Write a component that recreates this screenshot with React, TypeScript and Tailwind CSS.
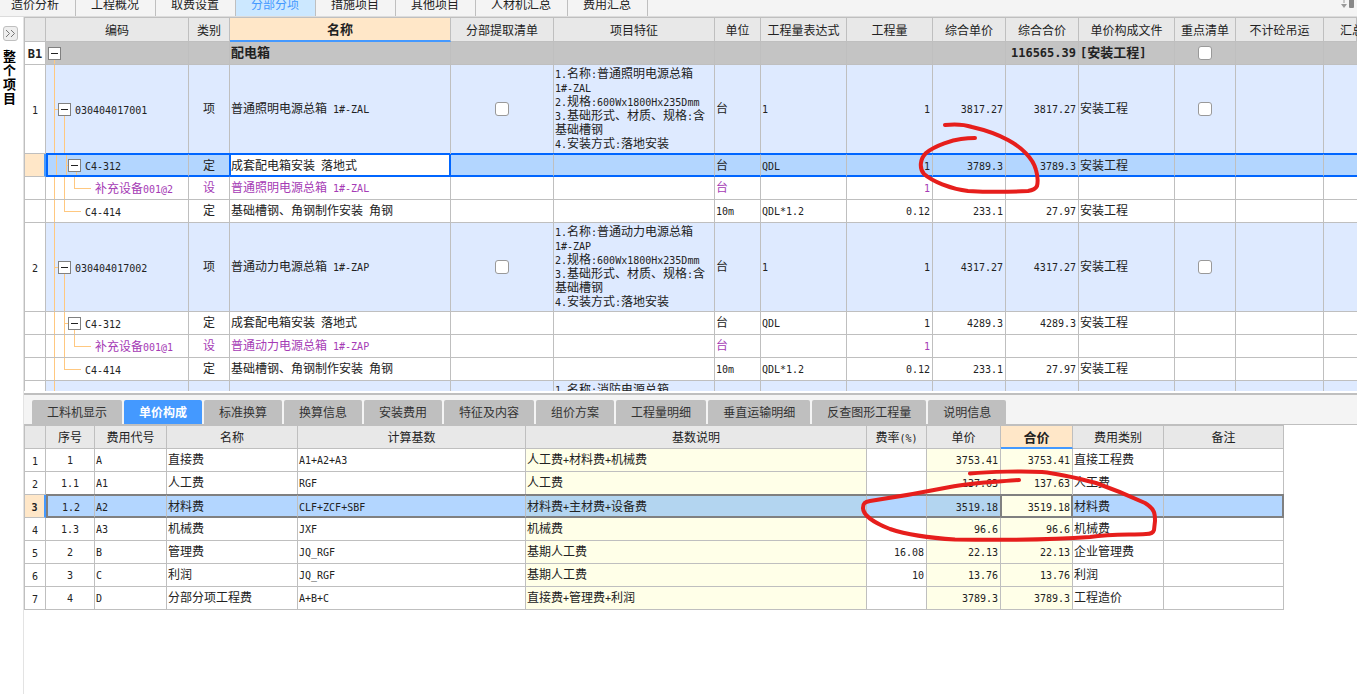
import React from "react";
import clsx from "clsx";

const MONO = "font-['DejaVu_Sans_Mono',monospace]";

// Latin runs are set in a half-width mono face beside the 12px hanzi
function Mixed({ text, bold = false }: { text: string; bold?: boolean }) {
  return (
    <>
      {text.split(/([\x20-\x7e]+)/).map((part, i) =>
        i % 2 ? (
          <span key={i} className={clsx(MONO, "leading-none whitespace-pre", bold ? "text-[12px]" : "text-[10px]")}>
            {part}
          </span>
        ) : (
          part
        )
      )}
    </>
  );
}

type Kind = "group" | "item" | "quota" | "device";

type Row = {
  no?: string;
  kind: Kind;
  code: string;
  last?: boolean;
  selected?: boolean;
  type: string;
  name: string;
  features?: string[];
  unit?: string;
  expr?: string;
  qty?: string;
  price?: string;
  total?: string;
  file?: string;
};

const rows: Row[] = [
  { no: "B1", kind: "group", code: "", type: "", name: "配电箱", total: "116565.39", file: "[安装工程]" },
  {
    no: "1", kind: "item", code: "030404017001", type: "项", name: "普通照明电源总箱 1#-ZAL",
    features: ["1.名称:普通照明电源总箱", "1#-ZAL", "2.规格:600Wx1800Hx235Dmm", "3.基础形式、材质、规格:含", "基础槽钢", "4.安装方式:落地安装"],
    unit: "台", expr: "1", qty: "1", price: "3817.27", total: "3817.27", file: "安装工程",
  },
  { kind: "quota", selected: true, code: "C4-312", type: "定", name: "成套配电箱安装 落地式", unit: "台", expr: "QDL", qty: "1", price: "3789.3", total: "3789.3", file: "安装工程" },
  { kind: "device", code: "补充设备001@2", type: "设", name: "普通照明电源总箱 1#-ZAL", unit: "台", qty: "1" },
  { kind: "quota", last: true, code: "C4-414", type: "定", name: "基础槽钢、角钢制作安装 角钢", unit: "10m", expr: "QDL*1.2", qty: "0.12", price: "233.1", total: "27.97", file: "安装工程" },
  {
    no: "2", kind: "item", code: "030404017002", type: "项", name: "普通动力电源总箱 1#-ZAP",
    features: ["1.名称:普通动力电源总箱", "1#-ZAP", "2.规格:600Wx1800Hx235Dmm", "3.基础形式、材质、规格:含", "基础槽钢", "4.安装方式:落地安装"],
    unit: "台", expr: "1", qty: "1", price: "4317.27", total: "4317.27", file: "安装工程",
  },
  { kind: "quota", code: "C4-312", type: "定", name: "成套配电箱安装 落地式", unit: "台", expr: "QDL", qty: "1", price: "4289.3", total: "4289.3", file: "安装工程" },
  { kind: "device", code: "补充设备001@1", type: "设", name: "普通动力电源总箱 1#-ZAP", unit: "台", qty: "1" },
  { kind: "quota", last: true, code: "C4-414", type: "定", name: "基础槽钢、角钢制作安装 角钢", unit: "10m", expr: "QDL*1.2", qty: "0.12", price: "233.1", total: "27.97", file: "安装工程" },
];

const columns = [
  { label: "", width: "w-[22px]" },
  { label: "编码", width: "w-[143px]" },
  { label: "类别", width: "w-[41px]" },
  { label: "名称", width: "w-[221px]", active: true },
  { label: "分部提取清单", width: "w-[103px]" },
  { label: "项目特征", width: "w-[161px]" },
  { label: "单位", width: "w-[46px]" },
  { label: "工程量表达式", width: "w-[86px]" },
  { label: "工程量", width: "w-[86px]" },
  { label: "综合单价", width: "w-[73px]" },
  { label: "综合合价", width: "w-[73px]" },
  { label: "单价构成文件", width: "w-[96px]" },
  { label: "重点清单", width: "w-[61px]" },
  { label: "不计砼吊运", width: "w-[88px]" },
  { label: "汇总", width: "", left: true },
];

const feeColumns = [
  { label: "", width: "w-[22px]" },
  { label: "序号", width: "w-[49px]" },
  { label: "费用代号", width: "w-[72px]" },
  { label: "名称", width: "w-[131px]" },
  { label: "计算基数", width: "w-[228px]" },
  { label: "基数说明", width: "w-[341px]" },
  { label: "费率(%)", width: "w-[60px]" },
  { label: "单价", width: "w-[74px]" },
  { label: "合价", width: "w-[72px]", active: true },
  { label: "费用类别", width: "w-[91px]" },
  { label: "备注", width: "w-[120px]" },
];

const fees = [
  ["1", "A", "直接费", "A1+A2+A3", "人工费+材料费+机械费", "", "3753.41", "3753.41", "直接工程费"],
  ["1.1", "A1", "人工费", "RGF", "人工费", "", "137.63", "137.63", "人工费"],
  ["1.2", "A2", "材料费", "CLF+ZCF+SBF", "材料费+主材费+设备费", "", "3519.18", "3519.18", "材料费"],
  ["1.3", "A3", "机械费", "JXF", "机械费", "", "96.6", "96.6", "机械费"],
  ["2", "B", "管理费", "JQ_RGF", "基期人工费", "16.08", "22.13", "22.13", "企业管理费"],
  ["3", "C", "利润", "JQ_RGF", "基期人工费", "10", "13.76", "13.76", "利润"],
  ["4", "D", "分部分项工程费", "A+B+C", "直接费+管理费+利润", "", "3789.3", "3789.3", "工程造价"],
];

const topTabs = ["造价分析", "工程概况", "取费设置", "分部分项", "措施项目", "其他项目", "人材机汇总", "费用汇总"];
const detailTabs = ["工料机显示", "单价构成", "标准换算", "换算信息", "安装费用", "特征及内容", "组价方案", "工程量明细", "垂直运输明细", "反查图形工程量", "说明信息"];

type Column = { label: string; width: string; active?: boolean; left?: boolean };

function HeadRow({ cols, height }: { cols: Column[]; height: string }) {
  return (
    <thead>
      <tr>
        {cols.map((c, i) => (
          <th
            key={i}
            scope="col"
            className={clsx(
              "border-r p-0 whitespace-nowrap",
              height,
              c.width,
              i === 0 && "border-l",
              c.left ? "pl-4 text-left" : "text-center",
              c.active
                ? "border-b-2 border-r-[#bfbfbf] border-b-[#4499ff] bg-[#ffe7c8] text-[13px] font-bold"
                : "border-b border-[#bfbfbf] bg-[#e8e8e8] font-normal"
            )}
          >
            <Mixed text={c.label} />
          </th>
        ))}
      </tr>
    </thead>
  );
}

function Check({ label }: { label: string }) {
  return (
    <input
      type="checkbox"
      aria-label={label}
      className="mx-auto block size-3.5 appearance-none rounded-[3px] border border-[#999] bg-white"
    />
  );
}

function Toggle() {
  return (
    <button
      aria-label="折叠"
      className="flex size-[13px] shrink-0 items-center justify-center border border-[#808080] bg-white"
    >
      <span className="h-px w-[7px] bg-[#222]" />
    </button>
  );
}

// Guide lines of the outline tree, drawn behind the toggle
function Guides({ row }: { row: Row }) {
  const { kind, last } = row;
  return (
    <svg className="absolute inset-0 h-full w-full" stroke="#ffc880" shapeRendering="crispEdges" aria-hidden="true">
      <line x1="8.5" x2="8.5" y1={kind === "group" ? "50%" : "0"} y2="100%" />
      {kind === "item" && (
        <>
          <line x1="8" x2="18" y1="50%" y2="50%" />
          <line x1="18.5" x2="18.5" y1="50%" y2="100%" />
        </>
      )}
      {kind === "quota" && (
        <>
          <line x1="18.5" x2="18.5" y1="0" y2={last ? "50%" : "100%"} />
          <line x1="18" x2={last ? "35" : "28"} y1="50%" y2="50%" />
          {!last && <line x1="28.5" x2="28.5" y1="50%" y2="100%" />}
        </>
      )}
      {kind === "device" && (
        <>
          <line x1="18.5" x2="18.5" y1="0" y2="100%" />
          <line x1="28.5" x2="28.5" y1="0" y2="50%" />
          <line x1="28" x2="45" y1="50%" y2="50%" />
        </>
      )}
    </svg>
  );
}

function BillRow({ row }: { row: Row }) {
  const group = row.kind === "group";
  const item = row.kind === "item";
  const sel = row.selected;
  const cell = clsx(
    "border-r border-r-[#bfbfbf] p-0",
    sel
      ? "border-t border-b-2 border-t-[#0066ff] border-b-[#0066ff] shadow-[0_-1px_0_#0066ff]"
      : "border-b border-b-[#bfbfbf]"
  );
  const text = clsx(cell, !sel && "pb-0.5");
  const right = clsx(text, "pr-0.5 text-right");
  const left = clsx(text, "pl-px");
  return (
    <tr
      className={clsx(
        group && "bg-[#c4c4c4] text-[13px] font-bold",
        item && "bg-[#deeaff]",
        sel && "bg-[#b3d6ff]",
        row.kind === "device" && "text-[#a53bb5]"
      )}
    >
      <td
        className={clsx(
          "border-b border-l border-[#bfbfbf] p-0 text-center",
          item ? "h-[89px]" : "h-[23px]",
          sel ? "border-r-2 border-r-[#4499ff] bg-[#ffe7c8]" : "border-r bg-white"
        )}
      >
        <Mixed text={row.no ?? ""} bold={group} />
      </td>
      <td className={clsx(cell, "relative", sel && "border-l-2 border-l-[#0066ff]")}>
        <Guides row={row} />
        <div
          className={clsx(
            "relative flex items-center gap-1 whitespace-nowrap",
            group && "pl-0.5",
            item && "pl-3",
            row.kind === "quota" && (row.last ? "pl-[39px]" : sel ? "pl-5" : "pl-[22px]"),
            row.kind === "device" && "pl-[49px]"
          )}
        >
          {row.kind !== "device" && !row.last && <Toggle />}
          <span>
            <Mixed text={row.code} />
          </span>
        </div>
      </td>
      <td className={clsx(text, "text-center")}>{row.type}</td>
      <td
        className={
          sel
            ? "border-t border-r-2 border-b-2 border-l border-[#0066ff] bg-white p-0 shadow-[-1px_-1px_0_#0066ff]"
            : left
        }
      >
        <Mixed text={row.name} />
      </td>
      <td className={cell}>{item && <Check label="分部提取清单" />}</td>
      <td className={clsx(left, "whitespace-nowrap")}>
        {row.features?.map((line) => (
          <div key={line} className="h-3.5">
            <Mixed text={line} />
          </div>
        ))}
      </td>
      <td className={left}>
        <Mixed text={row.unit ?? ""} />
      </td>
      <td className={left}>
        <Mixed text={row.expr ?? ""} />
      </td>
      <td className={right}>
        <Mixed text={row.qty ?? ""} />
      </td>
      <td className={right}>
        <Mixed text={row.price ?? ""} />
      </td>
      <td className={right}>
        <Mixed text={row.total ?? ""} bold={group} />
      </td>
      <td className={left}>
        <Mixed text={row.file ?? ""} bold={group} />
      </td>
      <td className={cell}>{(item || group) && <Check label="重点清单" />}</td>
      <td className={cell} />
      <td className={clsx(cell, "border-r-0")} />
    </tr>
  );
}

// Row of the next item, cut off by the lower edge of the pane
const nextRow: Row = {
  kind: "item", code: "", type: "", name: "",
  features: ["1.名称:消防电源总箱", " ", "2.规格:", "3.基础形式、材质、规格:含", "基础槽钢", "4.安装方式:落地安装"],
};

function FeeTable() {
  return (
    <table className="w-[1260px] table-fixed border-separate border-spacing-0 border-t border-[#bfbfbf]">
      <HeadRow cols={feeColumns} height="h-[23px]" />
      <tbody>
        {fees.map((fee, r) => {
          const sel = r === 2;
          return (
            <tr key={r} className={sel ? "bg-[#b3d6ff]" : "bg-white"}>
              <td
                className={clsx(
                  "h-[23px] border-b border-l border-[#bfbfbf] p-0 text-center",
                  sel ? "border-r-2 border-r-[#4499ff] bg-[#ffe7c8] font-bold" : "border-r"
                )}
              >
                <Mixed text={String(r + 1)} />
              </td>
              {[...fee, ""].map((value, c) => {
                const framed = sel && c === 7;
                const yellow = c === 4 || c === 6 || c === 7;
                return (
                  <td
                    key={c}
                    className={clsx(
                      "p-0",
                      !sel && "pb-0.5",
                      c === 0 && "text-center",
                      c >= 5 && c <= 7 ? "text-right" : c > 0 && "pl-px",
                      c >= 5 && c <= 7 && (framed ? "pr-px" : "pr-0.5"),
                      framed
                        ? "border-t border-r-2 border-b-2 border-l border-[#808080] shadow-[-1px_-1px_0_#808080]"
                        : sel
                          ? "border-t border-b-2 border-t-[#808080] border-b-[#808080] shadow-[0_-1px_0_#808080]"
                          : "border-r border-b border-[#bfbfbf]",
                      sel && c === 0 && "border-l-2 border-l-[#808080]",
                      sel && c === 9 && "border-r-2 border-r-[#808080]",
                      sel && c !== 7 && c !== 9 && "border-r border-r-[#bfbfbf]",
                      yellow && (framed || !sel) && "bg-[#ffffe8]",
                      yellow && sel && !framed && "bg-[#b3d5f0]"
                    )}
                  >
                    <Mixed text={value} />
                  </td>
                );
              })}
            </tr>
          );
        })}
      </tbody>
    </table>
  );
}

// Freehand red pen marks over both tables
function PenMarks() {
  return (
    <svg
      className="pointer-events-none absolute top-0 left-0"
      width="1357"
      height="694"
      fill="none"
      stroke="#e61e1c"
      strokeWidth="4"
      strokeLinecap="round"
      strokeLinejoin="round"
      aria-hidden="true"
    >
      <path d="M945 125C955 124 963 124 972 127C985 130 997 134 1008 140C1021 147 1033 158 1036 170C1038 177 1038 182 1037 186Q1035 190 1028 191C1010 192 985 192 968 191C950 189 932 181 924 174C919 168 920 159 926 153C936 145 953 140 961 139Q968 138 975 138" />
      <path d="M970 473.500C990 471.500 1025 471 1042 472C1062 474 1077 478 1096 483C1113 489 1132 497 1145 503C1155 509 1155 514 1155 521L1154 530Q1153 534 1146 534C1130 535 1113 534 1090 537C1050 540 990 540 955 539.500C930 538 905 534 890 529C877 524 863 516 863 508C863 503 865 502 870 501C890 498 920 493 950 487C970 483 995 482 1019 480" />
    </svg>
  );
}

export default function App() {
  return (
    <div className="relative flex min-h-screen flex-col overflow-hidden bg-white font-['Noto_Sans_CJK_SC',sans-serif] text-[12px] leading-[14px] text-[#222]">
      <nav className="flex h-[17px] items-end justify-between overflow-hidden border-b border-[#dcdcdc] bg-[#f4f4f4]">
        <div className="-ml-1 flex">
          {topTabs.map((tab) => (
            <button
              key={tab}
              className={clsx(
                "h-6 border-r border-[#bfbfbf] pr-4 pl-[15px] whitespace-nowrap",
                tab === "分部分项" ? "bg-[#cce8ff] text-[#4499ff]" : "text-[#222]"
              )}
            >
              {tab}
            </button>
          ))}
        </div>
        <svg width="17" height="16" aria-hidden="true">
          <path d="M4 0V3" stroke="#c8c8c8" strokeWidth="2" />
          <path d="M1 4H7L4 8Z" fill="#999" />
          <rect x="9" y="-4" width="5" height="12" rx="1" fill="#888" />
        </svg>
      </nav>

      <div className="flex flex-1">
        <aside className="flex w-6 shrink-0 flex-col border-r border-[#e3e3e3] pt-[9px] pl-[3px]">
          <button
            aria-label="展开"
            className="flex size-[15px] items-center justify-center rounded-[3px] border border-[#bfbfbf] bg-[#eee]"
          >
            <svg width="11" height="9" fill="none" stroke="#777" aria-hidden="true">
              <path d="M1 1L4.500 4.500L1 8M6 1L9.500 4.500L6 8" />
            </svg>
          </button>
          <div className="mt-2 flex w-3.5 flex-col text-[13px] font-bold text-black">
            {"整个项目".split("").map((ch) => (
              <span key={ch}>{ch}</span>
            ))}
          </div>
        </aside>

        <main className="min-w-0 flex-1">
          <section className="h-[374px] overflow-hidden border-t border-[#bfbfbf]">
            <table className="w-full table-fixed border-separate border-spacing-0">
              <HeadRow cols={columns} height="h-[24px]" />
              <tbody>
                {rows.map((row, i) => (
                  <BillRow key={i} row={row} />
                ))}
                <BillRow row={nextRow} />
              </tbody>
            </table>
          </section>

          <div className="mt-0.5 flex gap-0.5 border-t-2 border-b border-[#bfbfbf] bg-[#f4f4f4] pt-[5px] pl-2">
            {detailTabs.map((tab) => (
              <button
                key={tab}
                className={clsx(
                  "h-6 rounded-t-[2px] px-[15px] whitespace-nowrap",
                  tab === "单价构成" ? "bg-[#4499ff] font-bold text-white" : "bg-[#bfbfbf] text-[#333]"
                )}
              >
                {tab}
              </button>
            ))}
          </div>

          <FeeTable />
        </main>
      </div>

      <PenMarks />
    </div>
  );
}
